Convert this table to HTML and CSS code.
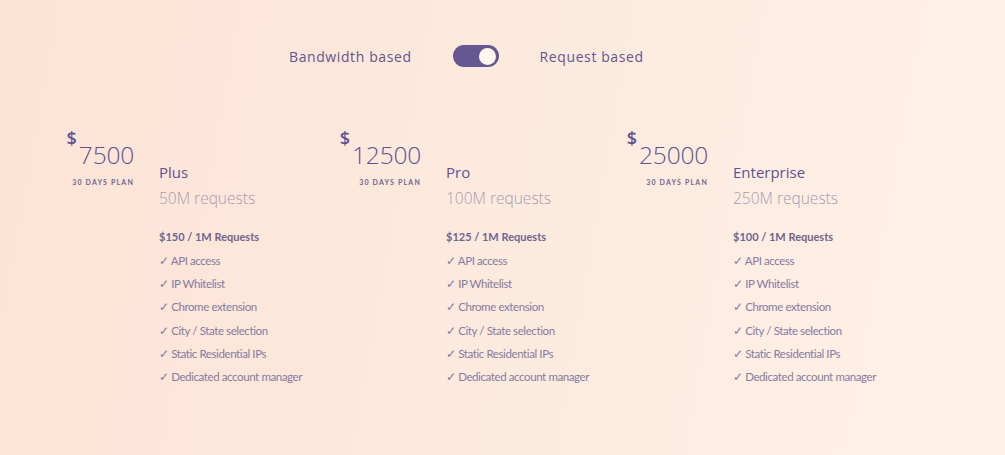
FILE: index.html
```html
<!DOCTYPE html>
<html lang="en">
<head>
<meta charset="utf-8">
<title>Pricing</title>
<link rel="stylesheet" href="styles.css">
</head>
<body>
<div class="page">
  <div class="switch-row">
    <span class="switch-label">Bandwidth based</span>
    <span class="switch"><span class="knob"></span></span>
    <span class="switch-label">Request based</span>
  </div>
  <div class="plans">
    <div class="plan">
      <div class="price-cell">
        <div class="price">
          <div class="amount"><span class="cur">$</span><span class="num">7500</span></div>
          <div class="period">30 DAYS PLAN</div>
        </div>
      </div>
      <div class="details">
        <div class="name">Plus</div>
        <div class="volume">50M requests</div>
        <div class="rate">$150 / 1M Requests</div>
        <ul class="features">
          <li>✓ API access</li>
          <li>✓ IP Whitelist</li>
          <li>✓ Chrome extension</li>
          <li>✓ City / State selection</li>
          <li>✓ Static Residential IPs</li>
          <li>✓ Dedicated account manager</li>
        </ul>
      </div>
    </div>
    <div class="plan">
      <div class="price-cell">
        <div class="price">
          <div class="amount"><span class="cur">$</span><span class="num">12500</span></div>
          <div class="period">30 DAYS PLAN</div>
        </div>
      </div>
      <div class="details">
        <div class="name">Pro</div>
        <div class="volume">100M requests</div>
        <div class="rate">$125 / 1M Requests</div>
        <ul class="features">
          <li>✓ API access</li>
          <li>✓ IP Whitelist</li>
          <li>✓ Chrome extension</li>
          <li>✓ City / State selection</li>
          <li>✓ Static Residential IPs</li>
          <li>✓ Dedicated account manager</li>
        </ul>
      </div>
    </div>
    <div class="plan">
      <div class="price-cell">
        <div class="price">
          <div class="amount"><span class="cur">$</span><span class="num">25000</span></div>
          <div class="period">30 DAYS PLAN</div>
        </div>
      </div>
      <div class="details">
        <div class="name">Enterprise</div>
        <div class="volume">250M requests</div>
        <div class="rate">$100 / 1M Requests</div>
        <ul class="features">
          <li>✓ API access</li>
          <li>✓ IP Whitelist</li>
          <li>✓ Chrome extension</li>
          <li>✓ City / State selection</li>
          <li>✓ Static Residential IPs</li>
          <li>✓ Dedicated account manager</li>
        </ul>
      </div>
    </div>
  </div>
</div>
</body>
</html>
```
FILE: styles.css
```css
html, body {
  margin: 0;
  padding: 0;
}
body {
  width: 1005px;
  height: 455px;
  overflow: hidden;
  background: linear-gradient(100deg, #fde3d6 0%, #fde9dd 45%, #fff1e7 100%);
  font-family: "Open Sans", "Liberation Sans", sans-serif;
  color: #5f5290;
}
.page {
  padding-top: 45px;
}
.switch-row {
  display: flex;
  align-items: center;
  padding-left: 289px;
  gap: 41px;
  height: 22px;
}
.switch-label {
  font-size: 14px;
  letter-spacing: 0.6px;
  color: #62558f;
}
.switch {
  width: 46px;
  height: 22px;
  border-radius: 11px;
  background: #655791;
  display: flex;
  align-items: center;
  justify-content: flex-end;
  padding-right: 3px;
  box-sizing: border-box;
}
.knob {
  width: 17px;
  height: 17px;
  border-radius: 50%;
  background: #fff6ee;
}
.plans {
  display: flex;
  padding-left: 30px;
  margin-top: 61px;
}
.plan {
  width: 287px;
  display: flex;
}
.price-cell {
  width: 129px;
  flex: none;
  display: flex;
  justify-content: flex-end;
  padding-right: 25px;
  box-sizing: border-box;
}
.price {
  display: flex;
  flex-direction: column;
  align-items: flex-end;
}
.amount {
  display: flex;
  align-items: flex-start;
}
.cur {
  font-size: 18px;
  line-height: 20px;
  font-weight: 600;
  margin-right: 2px;
  color: #5f5290;
}
.num {
  font-size: 24.5px;
  font-weight: 300;
  line-height: 28px;
  margin-top: 13px;
  letter-spacing: -0.2px;
  color: #5f5290;
}
.period {
  font-family: "Lato", "Liberation Sans", sans-serif;
  font-size: 7px;
  font-weight: 700;
  letter-spacing: 1.2px;
  margin-top: 9px;
  margin-right: 0;
  color: #6f6590;
}
.details {
  padding-top: 34px;
}
.name {
  font-size: 15px;
  font-weight: 500;
  line-height: 20px;
  color: #5f5290;
}
.volume {
  font-size: 15.5px;
  font-weight: 300;
  line-height: 20px;
  margin-top: 6px;
  color: #a49bb6;
}
.rate {
  font-family: "Lato", "Liberation Sans", sans-serif;
  font-size: 11px;
  font-weight: 700;
  margin-top: 21px;
  line-height: 16px;
  color: #6e648e;
}
.features {
  list-style: none;
  margin: 0;
  padding: 0;
  margin-top: 4px;
  font-family: "Lato", "Liberation Sans", sans-serif;
  font-size: 11.5px;
  letter-spacing: -0.4px;
  color: #857ba0;
}
.features li {
  line-height: 23.2px;
}
```
